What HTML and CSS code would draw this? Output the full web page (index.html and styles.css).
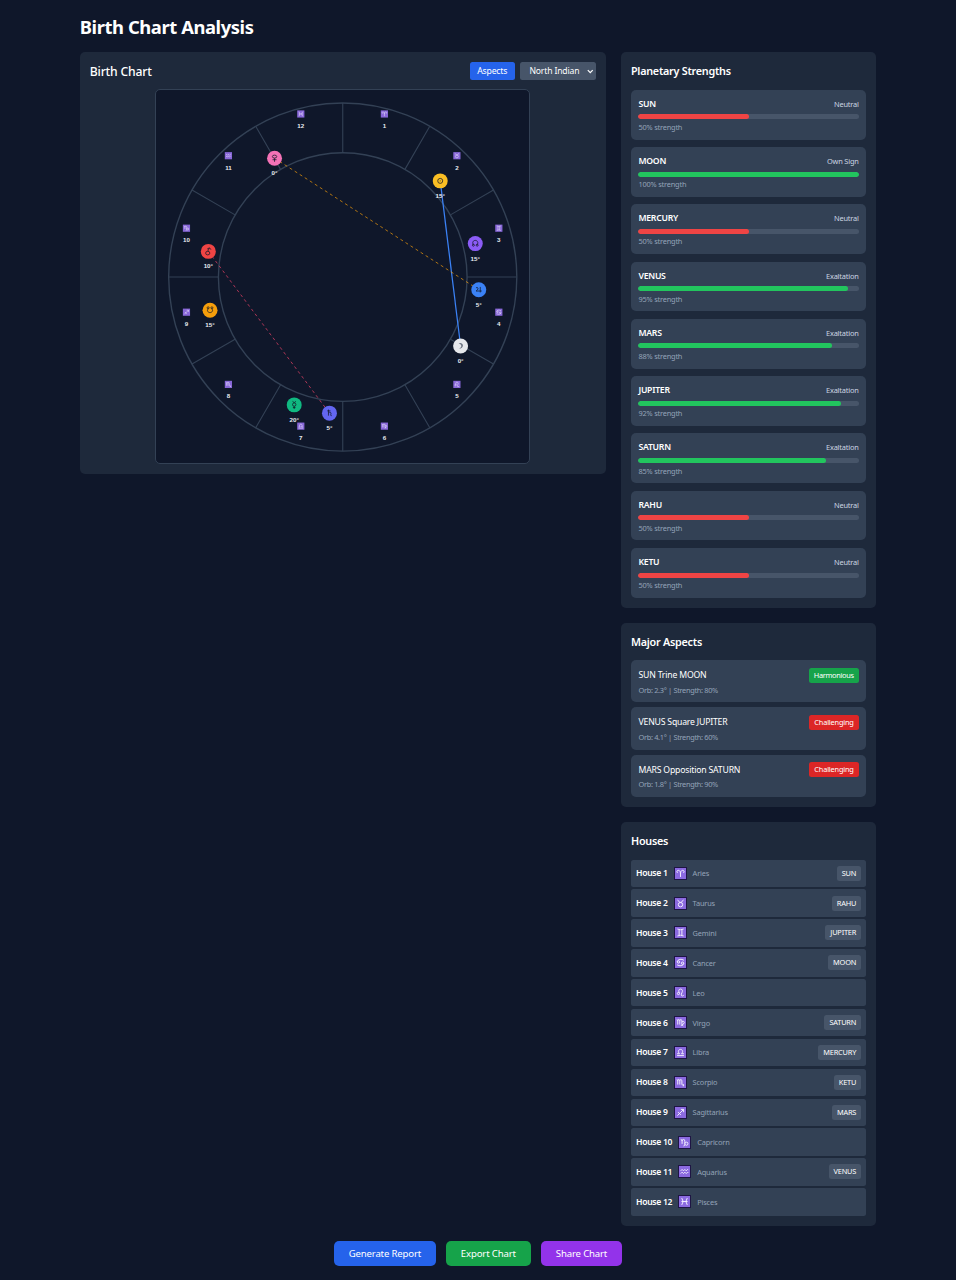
FILE: index.html
```html
<!DOCTYPE html>
<html lang="en">
<head>
<meta charset="utf-8">
<title>Birth Chart Analysis</title>
<link rel="stylesheet" href="styles.css">
</head>
<body>
<svg width="0" height="0" class="defs" aria-hidden="true">
  <defs>
    <path id="z1" d="M4 7.2C2 6 2.6 3.4 4.9 3.4 7 3.4 8 5.500 8 8.500V13M8 8.500C8 5.500 9 3.400 11.100 3.400 13.400 3.400 14 6 12 7.200"/>
    <g id="z2"><circle cx="8" cy="9.700" r="3.200"/><path d="M3.700 3C5.500 3 5 6.500 8 6.500S10.500 3 12.300 3"/></g>
    <path id="z3" d="M3.500 3Q8 5 12.500 3M3.500 13Q8 11 12.500 13M6 4V12M10 4V12"/>
    <g id="z4"><circle cx="5" cy="7.200" r="1.700"/><circle cx="11" cy="9" r="1.700"/><path d="M3.300 6.500C4.500 3 9.500 2.500 13 4.800M12.700 9.700C11.500 13.200 6.500 13.500 3 11.300"/></g>
    <g id="z5"><circle cx="5" cy="9.500" r="1.600"/><path d="M6.300 8.500C5 6.500 5 3 8 3S11.500 6 10 8.500 9 13 10.500 13 12.500 12.500 12.700 11.500"/></g>
    <path id="z6" d="M2.500 4Q4 3.500 4 5.500V11M4 5.500Q4.500 3.500 5.500 3.500T7 5.500V11M7 5.500Q7.500 3.500 8.500 3.500T10 5.500V10Q10 12.500 12 13M10 7Q13.500 5 13.500 8 13.500 10.500 8.500 12.500"/>
    <path id="z7" d="M3 12.500H13M3 9.800H6.500C3.700 7 5 3.500 8 3.500S12.300 7 9.500 9.800H13"/>
    <path id="z8" d="M2.500 4Q4 3.500 4 5.500V11M4 5.500Q4.500 3.500 5.500 3.500T7 5.500V11M7 5.500Q7.500 3.500 8.500 3.500T10 5.500V10.500Q10 12 12.500 12M11.500 10.500 13.200 12 11.500 13.500"/>
    <path id="z9" d="M3.500 12.500 12.500 3.500M8.500 3.500H12.500V7.500M4.500 7.500 8.500 11.500"/>
    <path id="z10" d="M2.500 3.500Q4.500 3.500 4.500 6V10M4.500 6Q4.500 3.500 6.500 3.500T8.500 6V11Q8.500 13 6.500 13M8.500 9.500Q9 7.500 11 7.500T13 9.700 11 12 8.500 10.500"/>
    <path id="z11" d="M2.500 7 4.500 5 6.500 7 8.500 5 10.500 7 12.500 5 13.500 6M2.500 11 4.500 9 6.500 11 8.500 9 10.500 11 12.500 9 13.500 10"/>
    <path id="z12" d="M4 3Q8 8 4 13M12 3Q8 8 12 13M3.500 8H12.500"/>
  </defs>
</svg>

<main class="page">
  <h1 class="page-title">Birth Chart Analysis</h1>
  <div class="columns">
    <section class="card chart-card">
      <header class="chart-head">
        <h2 class="chart-title">Birth Chart</h2>
        <div class="controls">
          <button class="toggle">Aspects</button>
          <div class="select"><span>North Indian</span><svg viewBox="0 0 8 6"><path d="M1 1.300 4 4.400 7 1.300"/></svg></div>
        </div>
      </header>
      <svg class="chart" viewBox="-187 -187.300 373 373">
        <g class="wheel">
          <circle r="174.300"/><circle r="124.500"/>
          <path d="M0-174.300V-124.500M0 124.500V174.300M-174.300 0H-124.500M124.500 0H174.300M87.150-150.950 62.250-107.820M150.950-87.150 107.820-62.250M150.950 87.150 107.820 62.250M87.150 150.950 62.250 107.820M-87.150 150.950-62.250 107.820M-150.950 87.150-107.820 62.250M-150.950-87.150-107.820-62.250M-87.150-150.950-62.250-107.820"/>
        </g>
        <path class="aspect trine" d="M97.600-96.300 118 69"/>
        <path class="aspect square" d="M-68.300-119 136.200 12.700"/>
        <path class="aspect opposition" d="M-134.600-25.700-13.300 136.300"/>
        <g class="planets">
          <g class="sun" transform="translate(97.600 -96.300)"><circle r="7.500"/><path d="M-2.500 0A2.500 2.500 0 1 0 2.500 0A2.500 2.500 0 1 0-2.500 0M-.400 0H.400"/><text y="17">15°</text></g>
          <g class="moon" transform="translate(118 69)"><circle r="7.500"/><path d="M-2-2.800C3.400-4.400 4.300 2.800-2 2.600 1.800 1.700 1.600-1.800-2-2.800Z"/><text y="17">0°</text></g>
          <g class="mercury" transform="translate(-48.600 128)"><circle r="7.500"/><path d="M-1.700-3.500Q0-1 1.700-3.500M-1.700-.300A1.700 1.700 0 1 0 1.700-.300A1.700 1.700 0 1 0-1.700-.300M0 1.400V4M-1.300 2.700H1.300"/><text y="17">20°</text></g>
          <g class="venus" transform="translate(-68.300 -119)"><circle r="7.500"/><path d="M-2.200-1.600A2.200 1.500 0 1 0 2.200-1.600A2.200 1.500 0 1 0-2.200-1.600M0 0V3.600M-2 1.500H2"/><text y="17">0°</text></g>
          <g class="mars" transform="translate(-134.600 -25.700)"><circle r="7.500"/><path d="M-2.700 1.700A2.100 1.800 0 1 0 1.500 1.700A2.100 1.800 0 1 0-2.700 1.700M-.500-.300 1-3.300M-1.200-2.300 1.200-3.600 2.600-1.700"/><text y="17">10°</text></g>
          <g class="jupiter" transform="translate(136.200 12.700)"><circle r="7.500"/><path d="M-2.800-1.900C-.800-3.200.500-.700-2.700 1.300H3M1.500-2.800V2.700"/><text y="17">5°</text></g>
          <g class="saturn" transform="translate(-13.300 136.300)"><circle r="7.500"/><path d="M-1-3.600V2.500M-2.200-2.300H1M-1-.200C.300-1.700 2-.700 1.500.800 1 2 1 2.700 2.200 2.500"/><text y="17">5°</text></g>
          <g class="rahu" transform="translate(132.700 -33.500)"><circle r="7.500"/><path d="M-1.700 1.200C-3.600-1-2-3.200 0-3.200S3.600-1 1.700 1.200M-2.900 1.600A1 1 0 1 0-.900 1.600A1 1 0 1 0-2.900 1.600M.900 1.600A1 1 0 1 0 2.900 1.600A1 1 0 1 0 .900 1.600"/><text y="17">15°</text></g>
          <g class="ketu" transform="translate(-132.900 33.300)"><circle r="7.500"/><path d="M-1.700-1.700C-3.600.300-2 2.300 0 2.300S3.600.300 1.700-1.700M-2.900-2.500A1 1 0 1 0-.900-2.500A1 1 0 1 0-2.900-2.500M.900-2.500A1 1 0 1 0 2.900-2.500A1 1 0 1 0 .900-2.500"/><text y="17">15°</text></g>
        </g>
        <g class="signs">
          <g transform="translate(41.700 -163.300)"><rect/><use href="#z1"/><text y="14">1</text></g>
          <g transform="translate(114.300 -121.500)"><rect/><use href="#z2"/><text y="14">2</text></g>
          <g transform="translate(156.300 -48.900)"><rect/><use href="#z3"/><text y="14">3</text></g>
          <g transform="translate(156.300 35.200)"><rect/><use href="#z4"/><text y="14">4</text></g>
          <g transform="translate(114.300 107.500)"><rect/><use href="#z5"/><text y="14">5</text></g>
          <g transform="translate(41.700 149.300)"><rect/><use href="#z6"/><text y="14">6</text></g>
          <g transform="translate(-42 149.300)"><rect/><use href="#z7"/><text y="14">7</text></g>
          <g transform="translate(-114.500 107.500)"><rect/><use href="#z8"/><text y="14">8</text></g>
          <g transform="translate(-156.500 35.200)"><rect/><use href="#z9"/><text y="14">9</text></g>
          <g transform="translate(-156.500 -48.900)"><rect/><use href="#z10"/><text y="14">10</text></g>
          <g transform="translate(-114.500 -121.500)"><rect/><use href="#z11"/><text y="14">11</text></g>
          <g transform="translate(-42 -163.300)"><rect/><use href="#z12"/><text y="14">12</text></g>
        </g>
      </svg>
    </section>

    <aside class="side">
      <section class="card">
        <h3 class="card-title">Planetary Strengths</h3>
        <div class="strengths">
          <div class="strength"><div class="row"><b>SUN</b><span>Neutral</span></div><div class="bar"><i class="low" style="width:50%"></i></div><p>50% strength</p></div>
          <div class="strength"><div class="row"><b>MOON</b><span>Own Sign</span></div><div class="bar"><i style="width:100%"></i></div><p>100% strength</p></div>
          <div class="strength"><div class="row"><b>MERCURY</b><span>Neutral</span></div><div class="bar"><i class="low" style="width:50%"></i></div><p>50% strength</p></div>
          <div class="strength"><div class="row"><b>VENUS</b><span>Exaltation</span></div><div class="bar"><i style="width:95%"></i></div><p>95% strength</p></div>
          <div class="strength"><div class="row"><b>MARS</b><span>Exaltation</span></div><div class="bar"><i style="width:88%"></i></div><p>88% strength</p></div>
          <div class="strength"><div class="row"><b>JUPITER</b><span>Exaltation</span></div><div class="bar"><i style="width:92%"></i></div><p>92% strength</p></div>
          <div class="strength"><div class="row"><b>SATURN</b><span>Exaltation</span></div><div class="bar"><i style="width:85%"></i></div><p>85% strength</p></div>
          <div class="strength"><div class="row"><b>RAHU</b><span>Neutral</span></div><div class="bar"><i class="low" style="width:50%"></i></div><p>50% strength</p></div>
          <div class="strength"><div class="row"><b>KETU</b><span>Neutral</span></div><div class="bar"><i class="low" style="width:50%"></i></div><p>50% strength</p></div>
        </div>
      </section>

      <section class="card">
        <h3 class="card-title">Major Aspects</h3>
        <div class="aspects">
          <div class="aspect-item"><div class="row"><span class="name">SUN Trine MOON</span><span class="badge good">Harmonious</span></div><p>Orb: 2.3° | Strength: 80%</p></div>
          <div class="aspect-item"><div class="row"><span class="name">VENUS Square JUPITER</span><span class="badge">Challenging</span></div><p>Orb: 4.1° | Strength: 60%</p></div>
          <div class="aspect-item"><div class="row"><span class="name">MARS Opposition SATURN</span><span class="badge">Challenging</span></div><p>Orb: 1.8° | Strength: 90%</p></div>
        </div>
      </section>

      <section class="card">
        <h3 class="card-title">Houses</h3>
        <div class="houses">
          <div class="house"><b>House 1</b><svg class="sign"><use href="#z1"/></svg><span>Aries</span><em>SUN</em></div>
          <div class="house"><b>House 2</b><svg class="sign"><use href="#z2"/></svg><span>Taurus</span><em>RAHU</em></div>
          <div class="house"><b>House 3</b><svg class="sign"><use href="#z3"/></svg><span>Gemini</span><em>JUPITER</em></div>
          <div class="house"><b>House 4</b><svg class="sign"><use href="#z4"/></svg><span>Cancer</span><em>MOON</em></div>
          <div class="house"><b>House 5</b><svg class="sign"><use href="#z5"/></svg><span>Leo</span></div>
          <div class="house"><b>House 6</b><svg class="sign"><use href="#z6"/></svg><span>Virgo</span><em>SATURN</em></div>
          <div class="house"><b>House 7</b><svg class="sign"><use href="#z7"/></svg><span>Libra</span><em>MERCURY</em></div>
          <div class="house"><b>House 8</b><svg class="sign"><use href="#z8"/></svg><span>Scorpio</span><em>KETU</em></div>
          <div class="house"><b>House 9</b><svg class="sign"><use href="#z9"/></svg><span>Sagittarius</span><em>MARS</em></div>
          <div class="house"><b>House 10</b><svg class="sign"><use href="#z10"/></svg><span>Capricorn</span></div>
          <div class="house"><b>House 11</b><svg class="sign"><use href="#z11"/></svg><span>Aquarius</span><em>VENUS</em></div>
          <div class="house"><b>House 12</b><svg class="sign"><use href="#z12"/></svg><span>Pisces</span></div>
        </div>
      </section>
    </aside>
  </div>
  <footer class="actions">
    <button class="action generate">Generate Report</button>
    <button class="action export">Export Chart</button>
    <button class="action share">Share Chart</button>
  </footer>
</main>
</body>
</html>
```
FILE: styles.css
```css
* { box-sizing: border-box; margin: 0; padding: 0; }
body { background: #0f172a; color: #fff; font-family: "Noto Sans", "Open Sans", sans-serif; }
button { border: 0; color: #fff; font-family: inherit; }
.defs { display: block; }
.page { width: 796.4px; margin: 0 auto; padding-top: 15px; }
.page-title { font-size: 18.4px; line-height: 24px; font-weight: 700; letter-spacing: -0.42px; margin-bottom: 13.4px; }
.columns { display: flex; align-items: flex-start; gap: 15px; }
.card { background: #1e293b; border-radius: 5px; padding: 10px; }
.chart-card { width: 526.2px; height: 421.3px; }
.chart-head { display: flex; justify-content: space-between; align-items: center; height: 17.5px; margin-bottom: 9.4px; }
.chart-title { font-size: 12.2px; font-weight: 500; letter-spacing: -0.2px; }
.controls { display: flex; gap: 5px; }
.toggle { width: 45px; height: 17.5px; border-radius: 2.5px; background: #2563eb; font-size: 8.7px; letter-spacing: -0.2px; }
.select { width: 76.3px; height: 17.5px; border-radius: 2.5px; background: #475569; font-size: 8.6px; letter-spacing: -0.15px; display: flex; align-items: center; justify-content: space-between; padding: 0 2px 0 9.7px; }
.select svg { width: 6.5px; height: 5px; fill: none; stroke: #fff; stroke-width: 1.5; }
.chart { display: block; width: 374.5px; height: 374.5px; margin: 0 auto 0 65.3px; background: #0f172a; border: 1px solid #334155; border-radius: 5px; }
.wheel { fill: none; stroke: #334155; stroke-width: 1.4; }
.wheel path { stroke-width: 1.1; }
.chart text { font: bold 6.2px "Liberation Sans", Arial, sans-serif; fill: #e8ebf0; text-anchor: middle; }
.signs rect { x: -3.6px; y: -3.6px; width: 7.2px; height: 7.2px; fill: #8867d8; }
.signs use { transform: scale(0.45) translate(-8px, -8px); fill: none; stroke: #e4dcfa; stroke-width: 1.3; }
.aspect { fill: none; }
.trine { stroke: #3b82f6; stroke-width: 1.25; }
.square { stroke: #f59e0b; stroke-width: 1; stroke-dasharray: 3 3; opacity: 0.7; }
.opposition { stroke: #ef4468; stroke-width: 1; stroke-dasharray: 3 3; opacity: 0.7; }
.planets path { fill: none; stroke: #111827; stroke-width: 0.75; }
.sun circle { fill: #fbbf24; }
.moon circle { fill: #e5e7eb; }
.planets .moon path { stroke-width: 0; fill: #6b7280; }
.mercury circle { fill: #10b981; }
.venus circle { fill: #f472b6; }
.mars circle { fill: #ef4444; }
.jupiter circle { fill: #3b82f6; }
.saturn circle { fill: #6366f1; }
.rahu circle { fill: #8b5cf6; }
.ketu circle { fill: #f59e0b; }

.side { width: 255.2px; display: flex; flex-direction: column; gap: 15px; }
.card-title { font-size: 10.8px; line-height: 17.5px; font-weight: 600; letter-spacing: -0.26px; margin-bottom: 9.95px; }
.row { display: flex; justify-content: space-between; align-items: center; height: 15px; white-space: nowrap; }
.strengths { display: grid; gap: 7.49px; }
.strength { height: 49.79px; padding: 6.5px 7.5px; border-radius: 5px; background: #334155; }
.strength b { font-size: 8.7px; font-weight: 600; letter-spacing: -0.27px; }
.strength .row span { font-size: 7.4px; letter-spacing: -0.18px; color: #cbd5e1; }
.bar { height: 5px; margin: 3.1px 0 2.5px; border-radius: 3px; background: #475569; overflow: hidden; }
.bar i { display: block; height: 100%; border-radius: 3px; background: #22c55e; }
.bar .low { background: #ef4444; }
.side p { font-size: 7.4px; line-height: 10px; letter-spacing: -0.2px; color: #94a3b8; }
.aspects { display: grid; gap: 5px; }
.aspect-item { height: 42.3px; padding: 7.5px; border-radius: 5px; background: #334155; }
.aspect-item p { margin-top: 1.9px; letter-spacing: -0.32px; }
.name { font-size: 8.7px; letter-spacing: -0.2px; }
.badge { height: 15px; padding: 0 5px; border-radius: 2.5px; background: #dc2626; font-size: 7.4px; line-height: 15px; letter-spacing: -0.2px; }
.good { background: #16a34a; letter-spacing: -0.32px; }
.houses { display: grid; gap: 2.5px; }
.house { display: flex; align-items: center; height: 27.38px; padding: 0 5px; border-radius: 2.5px; background: #334155; }
.house b { font-size: 8.6px; font-weight: 600; letter-spacing: -0.3px; }
.house span { font-size: 7.4px; letter-spacing: -0.18px; color: #94a3b8; }
.house em { margin-left: auto; height: 15px; padding: 0 5px; border-radius: 2.5px; background: #475569; font-size: 7.4px; line-height: 15px; font-style: normal; letter-spacing: -0.2px; }
.sign { width: 13px; height: 13px; margin: 0 6px; background: #8b6ae0; border: 1px solid #1e1544; fill: none; stroke: #f3efff; stroke-width: 1.4; }
.sign use { transform: scale(0.6875); }
.actions { display: flex; justify-content: center; gap: 10px; margin-top: 15px; }
.action { height: 25px; border-radius: 5px; font-size: 9.6px; letter-spacing: -0.15px; }
.generate { width: 102px; background: #2563eb; }
.export { width: 85px; background: #16a34a; }
.share { width: 81.2px; background: #9333ea; }
```
